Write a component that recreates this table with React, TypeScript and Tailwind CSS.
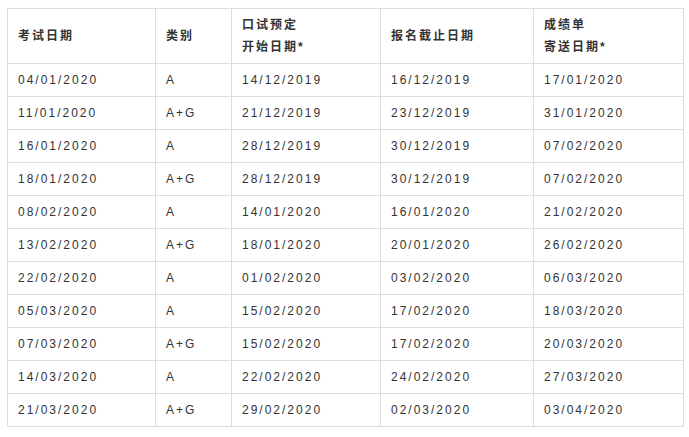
import React from "react";

const rows: [string, string, string, string, string][] = [
  ["04/01/2020", "A", "14/12/2019", "16/12/2019", "17/01/2020"],
  ["11/01/2020", "A+G", "21/12/2019", "23/12/2019", "31/01/2020"],
  ["16/01/2020", "A", "28/12/2019", "30/12/2019", "07/02/2020"],
  ["18/01/2020", "A+G", "28/12/2019", "30/12/2019", "07/02/2020"],
  ["08/02/2020", "A", "14/01/2020", "16/01/2020", "21/02/2020"],
  ["13/02/2020", "A+G", "18/01/2020", "20/01/2020", "26/02/2020"],
  ["22/02/2020", "A", "01/02/2020", "03/02/2020", "06/03/2020"],
  ["05/03/2020", "A", "15/02/2020", "17/02/2020", "18/03/2020"],
  ["07/03/2020", "A+G", "15/02/2020", "17/02/2020", "20/03/2020"],
  ["14/03/2020", "A", "22/02/2020", "24/02/2020", "27/03/2020"],
  ["21/03/2020", "A+G", "29/02/2020", "02/03/2020", "03/04/2020"],
];

const cell =
  "border border-[#dddddd] px-[10px] py-[5px] leading-[22px] align-middle text-left";

export default function App() {
  return (
    <div
      className="bg-white pt-[8px] pl-[7px] text-[12px] tracking-[2px] text-[#333333]"
      style={{ fontFamily: '"Liberation Sans", Arial, "Noto Sans CJK SC", sans-serif' }}
    >
      <table className="border-collapse w-[677px] table-fixed">
        <colgroup>
          <col className="w-[148px]" />
          <col className="w-[76px]" />
          <col className="w-[149px]" />
          <col className="w-[153px]" />
          <col className="w-[150px]" />
        </colgroup>
        <thead>
          <tr>
            <th className={`${cell} font-bold`}>考试日期</th>
            <th className={`${cell} font-bold`}>类别</th>
            <th className={`${cell} font-bold`}>
              口试预定
              <br />
              开始日期*
            </th>
            <th className={`${cell} font-bold`}>报名截止日期</th>
            <th className={`${cell} font-bold`}>
              成绩单
              <br />
              寄送日期*
            </th>
          </tr>
        </thead>
        <tbody>
          {rows.map((r, i) => (
            <tr key={i}>
              {r.map((c, j) => (
                <td key={j} className={cell}>
                  {c}
                </td>
              ))}
            </tr>
          ))}
        </tbody>
      </table>
    </div>
  );
}
